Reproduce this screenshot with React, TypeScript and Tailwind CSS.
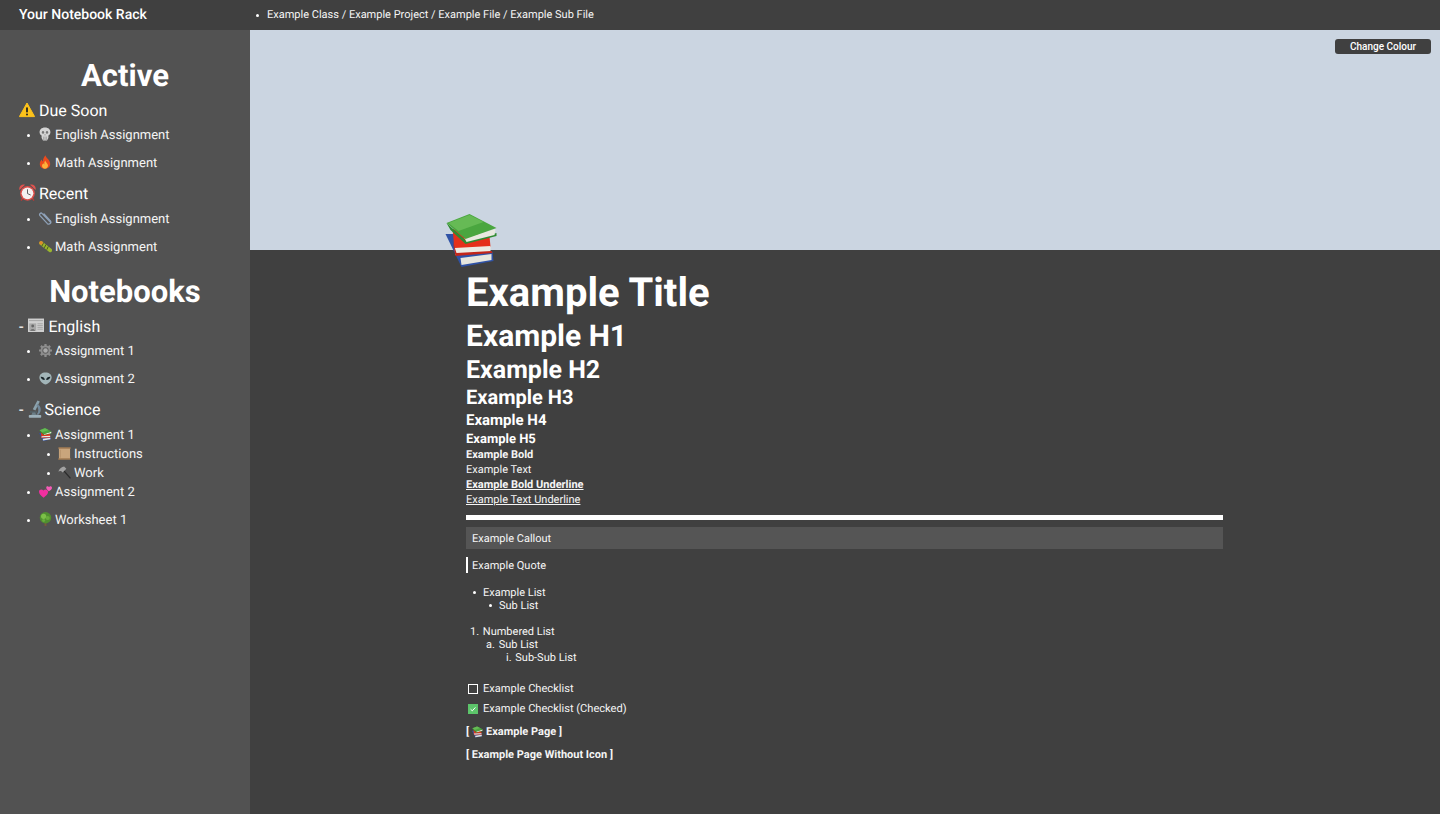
import React from 'react';

type IconProps = { className?: string };

const Warning = ({ className }: IconProps) => (
  <svg viewBox="0 0 16 16" className={className}>
    <path d="M8 1 L15.6 14.6 H0.4 Z" fill="#fcc21b" stroke="#fcc21b" strokeLinejoin="round" />
    <rect x="7.1" y="5.2" width="1.8" height="5.4" rx="0.8" fill="#222" />
    <circle cx="8" cy="12.4" r="1" fill="#222" />
  </svg>
);

const Skull = ({ className }: IconProps) => (
  <svg viewBox="0 0 12 14" className={className}>
    <path d="M6 0.4 C9.6 0.4 11.6 2.6 11.4 5.6 C11.3 7.2 10.4 8.2 9.4 8.6 L9.4 11 L8 13.6 H4 L2.6 11 L2.6 8.6 C1.6 8.2 0.7 7.2 0.6 5.6 C0.4 2.6 2.4 0.4 6 0.4 Z" fill="#d4d4d4" />
    <ellipse cx="4" cy="5.4" rx="1.2" ry="1.3" fill="#777" />
    <ellipse cx="8" cy="5.4" rx="1.2" ry="1.3" fill="#777" />
    <path d="M6 7 L6.7 8.2 H5.3 Z" fill="#777" />
    <path d="M4.6 9.6 V13 M6 9.6 V13.4 M7.4 9.6 V13" stroke="#8a8a8a" strokeWidth="0.6" />
  </svg>
);

const Fire = ({ className }: IconProps) => (
  <svg viewBox="0 0 12 14" className={className}>
    <path d="M6.4 0.2 C7 3 11.2 4.8 11.2 8.8 C11.2 11.8 8.8 13.8 6 13.8 C3 13.8 0.8 11.6 0.8 8.9 C0.8 7 1.9 5.4 2.8 4.6 C3 5.6 3.4 6.2 4 6.4 C3.8 4.2 5 2 6.4 0.2 Z" fill="#ec4a1c" />
    <path d="M6.2 5.6 C6.6 7.4 9 8.6 9 10.6 C9 12.4 7.5 13.8 6 13.8 C4.3 13.8 3 12.4 3 10.8 C3 9.6 3.8 8.8 4.5 8.2 C4.7 8.8 5 9.2 5.4 9.4 C5.2 8 5.4 6.8 6.2 5.6 Z" fill="#fdb13a" />
  </svg>
);

const Alarm = ({ className }: IconProps) => (
  <svg viewBox="0 0 16 16" className={className}>
    <path d="M3.2 13.6 L2 15.6 M12.8 13.6 L14 15.6" stroke="#b93a37" strokeWidth="1.3" />
    <path d="M0.4 5.6 C-0.4 2.4 2.2 -0.2 5.6 0.6 Z" fill="#e0534f" />
    <path d="M15.6 5.6 C16.4 2.4 13.8 -0.2 10.4 0.6 Z" fill="#e0534f" />
    <circle cx="8" cy="8.8" r="6.9" fill="#dc4c48" />
    <circle cx="8" cy="8.8" r="5.5" fill="#f4efef" />
    <path d="M8 5 V9 L11 10.4" stroke="#444" strokeWidth="0.8" fill="none" />
  </svg>
);

const Clip = ({ className }: IconProps) => (
  <svg viewBox="0 0 14 14" className={className}>
    <path d="M12.6 11.4 L4.2 2.6 C2.8 1.2 0.8 2.8 2 4.6 L9.2 12.4 C11.4 14.2 14 12 12.2 9.6 L6 3" fill="none" stroke="#8ea1b8" strokeWidth="1.3" strokeLinecap="round" />
  </svg>
);

const Caterpillar = ({ className }: IconProps) => (
  <svg viewBox="0 0 14 14" className={className}>
    <path d="M2.4 3.4 L12 11" stroke="#9ab52e" strokeWidth="4.2" strokeLinecap="round" />
    <path d="M4.8 3 L3.2 6.4 M7.4 5 L5.8 8.4 M10 7 L8.4 10.4" stroke="#2f3a14" strokeWidth="0.8" />
    <circle cx="2.2" cy="3" r="2" fill="#de8c2a" />
  </svg>
);

const News = ({ className }: IconProps) => (
  <svg viewBox="0 0 16 14" className={className}>
    <rect x="0" y="0" width="16" height="14" fill="#cfcfcf" />
    <rect x="0" y="0" width="16" height="1" fill="#8c8c8c" />
    <path d="M1 2.6 H15" stroke="#9a9a9a" strokeWidth="0.8" />
    <rect x="1.2" y="5.4" width="7" height="7.4" fill="#a8a8a8" />
    <circle cx="4.7" cy="8" r="1.4" fill="#666" />
    <path d="M2.2 12.8 C2.4 10.6 7 10.6 7.2 12.8 Z" fill="#666" />
    <path d="M9.4 5.8 H14.8 M9.4 7.6 H14.8 M9.4 9.4 H14.8 M9.4 11.2 H14.8" stroke="#969696" strokeWidth="0.7" />
  </svg>
);

const Gear = ({ className }: IconProps) => (
  <svg viewBox="0 0 14 14" className={className}>
    <circle cx="7" cy="7" r="5.4" fill="#8e8e8e" />
    <path d="M7 0 V14 M0 7 H14 M2 2 L12 12 M12 2 L2 12" stroke="#8e8e8e" strokeWidth="2.4" />
    <circle cx="7" cy="7" r="3.4" fill="#5f5f5f" />
    <circle cx="7" cy="7" r="2.4" fill="#a9a9a9" />
  </svg>
);

const Alien = ({ className }: IconProps) => (
  <svg viewBox="0 0 14 14" className={className}>
    <path d="M7 0.6 C11 0.6 13.6 2.8 13.6 6 C13.6 9.6 9.6 13.4 7 13.4 C4.4 13.4 0.4 9.6 0.4 6 C0.4 2.8 3 0.6 7 0.6 Z" fill="#a2b5b8" />
    <path d="M1.8 5.2 C4.2 5 6.2 6.4 6.2 8.6 C4 8.8 2 7.4 1.8 5.2 Z" fill="#182428" />
    <path d="M12.2 5.2 C9.8 5 7.8 6.4 7.8 8.6 C10 8.8 12 7.4 12.2 5.2 Z" fill="#182428" />
  </svg>
);

const Microscope = ({ className }: IconProps) => (
  <svg viewBox="0 0 14 18" className={className}>
    <path d="M9.4 0.4 L11.8 1.6 L7.4 10.4 L4.8 9.2 Z" fill="#8ba2ad" />
    <path d="M9.4 4 C13.4 6 14 11.6 10.4 14.8 H8.2 C11 12.4 11 8 8.4 5.8 Z" fill="#72899a" />
    <rect x="2" y="11.4" width="7" height="1.2" fill="#54656e" />
    <rect x="0.8" y="15" width="12.4" height="2.8" rx="0.7" fill="#9cb0ba" />
    <path d="M4.4 12.6 L3.4 15 H8.4 L7.2 12.6 Z" fill="#6c7f88" />
  </svg>
);

const Books = ({ className }: IconProps) => (
  <svg viewBox="0 0 52 53" className={className}>
    {/* blue book */}
    <path d="M0 20 L12 20 L47 38 L48 47 L16 53 Z" fill="#2f52a6" />
    <path d="M15 44 L46 40 L46 46 L16 51 Z" fill="#e6e6de" />
    {/* red book */}
    <path d="M7 15 L44 22 L45 33 L9 35 Z" fill="#e5301b" />
    <path d="M9 34 L45 32 L45 38 L10 41 Z" fill="#ecebe3" />
    <path d="M7 26 L10 42 L47 39 L46 37 L11 39 L9 33 Z" fill="#c2261a" />
    {/* green book */}
    <path d="M1 9 L5 16 L20 30 L51 22 L51 19 L21 27 Z" fill="#2f8a31" />
    <path d="M19 24 L50 15 L49 21 L21 28 Z" fill="#e9e9df" />
    <path d="M1 9 L24 0 L51 14 L20 25 Z" fill="#4aa63f" />
    <path d="M3 9 L24 1 L38 8 L13 17 Z" fill="#66ba55" />
  </svg>
);

const Scroll = ({ className }: IconProps) => (
  <svg viewBox="0 0 14 14" className={className}>
    <rect x="1" y="1" width="12" height="12" fill="#c9a57c" />
    <rect x="0.2" y="0.2" width="13.6" height="1.8" rx="0.9" fill="#a07a52" />
    <rect x="0.2" y="12" width="13.6" height="1.8" rx="0.9" fill="#a07a52" />
    <rect x="2" y="3" width="0.8" height="8.6" fill="#b08e66" />
  </svg>
);

const Hammer = ({ className }: IconProps) => (
  <svg viewBox="0 0 14 14" className={className}>
    <path d="M5.4 4.2 L13 12.8" stroke="#2c2c2c" strokeWidth="1.5" strokeLinecap="round" />
    <path d="M0.4 6 C1.6 2.8 4 0.8 6.6 0.6 L9 3 L5 7 L3.6 5.6 C2.6 5.2 1.4 5.4 0.4 6 Z" fill="#a2a2a2" />
  </svg>
);

const Hearts = ({ className }: IconProps) => (
  <svg viewBox="0 0 14 14" className={className}>
    <path d="M5 13.6 C2 11.6 0 9.4 0 7.2 C0 5 2.8 4 4.8 6 C6.4 3.8 9.8 4.8 9.8 7.4 C9.8 9.8 7.4 12 5 13.6 Z" fill="#f02f9f" />
    <path d="M10.6 6.8 C8.8 5.4 7.8 4.2 7.8 2.8 C7.8 1.4 9.6 0.8 10.8 2.2 C11.8 0.6 14 1.2 14 3 C14 4.6 12.4 5.8 10.6 6.8 Z" fill="#f65cb8" />
  </svg>
);

const Tree = ({ className }: IconProps) => (
  <svg viewBox="0 0 14 15" className={className}>
    <rect x="6" y="10" width="2" height="5" fill="#7a5a3a" />
    <circle cx="7" cy="6.2" r="6.2" fill="#508f30" />
    <circle cx="5" cy="4.6" r="2.8" fill="#7cc048" />
    <circle cx="9.4" cy="6.4" r="2.2" fill="#68ad3c" />
    <circle cx="5" cy="9" r="1.6" fill="#68ad3c" />
  </svg>
);

const Bullet = () => <span className="w-[3px] h-[3px] rounded-full bg-white shrink-0" />;

const SideItem = ({ icon, label }: { icon: React.ReactNode; label: string }) => (
  <div className="flex items-center h-[19px] pl-[27px] text-[13px] text-neutral-100">
    <Bullet />
    <span className="w-[12px] ml-[9px] mr-[4px] flex justify-center">{icon}</span>
    <span>{label}</span>
  </div>
);

const SubItem = ({ icon, label }: { icon: React.ReactNode; label: string }) => (
  <div className="flex items-center h-[19px] pl-[47px] text-[13px] text-neutral-100">
    <Bullet />
    <span className="w-[13px] ml-[8px] mr-[3px] flex justify-center">{icon}</span>
    <span>{label}</span>
  </div>
);

const SideHead = ({ children }: { children: React.ReactNode }) => (
  <div className="flex items-center h-[24px] pl-[19px] text-[16px] text-white">{children}</div>
);

const Sidebar = () => (
  <aside className="w-[250px] shrink-0 bg-[#525252] text-white">
    <h2 className="text-center text-[31px] font-bold leading-[36px] pt-[28px]">Active</h2>
    <div className="mt-[5px]">
      <SideHead>
        <Warning className="w-[16px] h-[16px] shrink-0 mr-[4px] -mt-[3px]" />
        Due Soon
      </SideHead>
      <div className="flex flex-col gap-[9px] mt-[3px]">
        <SideItem icon={<Skull className="w-[12px] h-[14px] shrink-0 -mt-[3px]" />} label="English Assignment" />
        <SideItem icon={<Fire className="w-[12px] h-[14px] shrink-0 -mt-[3px]" />} label="Math Assignment" />
      </div>
    </div>
    <div className="mt-[9px]">
      <SideHead>
        <Alarm className="w-[17px] h-[17px] shrink-0 mr-[3px] -mt-[4px]" />
        Recent
      </SideHead>
      <div className="flex flex-col gap-[9px] mt-[4px]">
        <SideItem icon={<Clip className="w-[14px] h-[14px] shrink-0 -mt-[3px]" />} label="English Assignment" />
        <SideItem icon={<Caterpillar className="w-[13px] h-[13px] shrink-0 -mt-[3px]" />} label="Math Assignment" />
      </div>
    </div>
    <h2 className="text-center text-[31px] font-bold leading-[36px] mt-[17px]">Notebooks</h2>
    <div className="mt-[5px]">
      <SideHead>
        - <News className="w-[16px] h-[14px] shrink-0 ml-[5px] mr-[4px] -mt-[5px]" />
        English
      </SideHead>
      <div className="flex flex-col gap-[9px] mt-[3px]">
        <SideItem icon={<Gear className="w-[13px] h-[13px] shrink-0 -mt-[3px]" />} label="Assignment 1" />
        <SideItem icon={<Alien className="w-[13px] h-[13px] shrink-0 -mt-[2px]" />} label="Assignment 2" />
      </div>
    </div>
    <div className="mt-[9px]">
      <SideHead>
        - <Microscope className="w-[14px] h-[18px] shrink-0 ml-[5px] mr-[2px] -mt-[3px]" />
        Science
      </SideHead>
      <div className="flex flex-col mt-[4px]">
        <SideItem icon={<Books className="w-[13px] h-[13px] shrink-0 -mt-[3px]" />} label="Assignment 1" />
        <SubItem icon={<Scroll className="w-[13px] h-[13px] shrink-0 -mt-[3px]" />} label="Instructions" />
        <SubItem icon={<Hammer className="w-[13px] h-[13px] shrink-0 -mt-[3px]" />} label="Work" />
        <SideItem icon={<Hearts className="w-[13px] h-[13px] shrink-0 -mt-[3px]" />} label="Assignment 2" />
        <div className="mt-[9px]">
          <SideItem icon={<Tree className="w-[13px] h-[14px] shrink-0 -mt-[3px]" />} label="Worksheet 1" />
        </div>
      </div>
    </div>
  </aside>
);

export default function App() {
  return (
    <div className="w-[1440px] h-[814px] overflow-hidden flex flex-col bg-[#404040] text-white font-['Roboto',sans-serif] antialiased [text-rendering:geometricPrecision]">
      {/* Top bar */}
      <header className="h-[30px] shrink-0 flex items-center bg-[#404040]">
        <div className="w-[250px] pl-[19px] text-[14px] font-medium">Your Notebook Rack</div>
        <div className="flex items-center pl-[6px] text-[11px] text-neutral-100">
          <Bullet />
          <span className="ml-[8px]">Example Class / Example Project / Example File / Example Sub File</span>
        </div>
      </header>

      <div className="flex flex-1 min-h-0">
        <Sidebar />
        <main className="flex-1 min-w-0">
          {/* Banner */}
          <div className="relative h-[220px] bg-[#cbd5e1]">
            <button className="absolute top-[9px] right-[9px] w-[96px] h-[15px] rounded-[3px] bg-[#404040] text-[10px] font-medium text-white flex items-center justify-center">
              Change Colour
            </button>
          </div>

          {/* Page */}
          <div className="relative w-[757px] ml-[216px]">
            <Books className="absolute -left-[21px] -top-[36px] w-[53px] h-[53px]" />
            <h1 className="text-[40px] font-bold leading-[47px] pt-[19px]">Example Title</h1>
            <h2 className="text-[30px] font-bold leading-[35px] mt-[3px]">Example H1</h2>
            <h3 className="text-[25px] font-bold leading-[29px] mt-[2px]">Example H2</h3>
            <h4 className="text-[20px] font-bold leading-[24px] mt-0">Example H3</h4>
            <h5 className="text-[15px] font-bold leading-[18px] mt-[2px]">Example H4</h5>
            <h6 className="text-[13px] font-bold leading-[15px] mt-[3px]">Example H5</h6>
            <div className="text-[11px] leading-[15px] text-neutral-100">
              <p className="font-bold">Example Bold</p>
              <p>Example Text</p>
              <p className="font-bold underline">Example Bold Underline</p>
              <p className="underline">Example Text Underline</p>
            </div>
            <hr className="h-[5px] bg-white border-0 mt-[8px]" />
            <div className="mt-[7px] h-[22px] flex items-center px-[6px] pt-[2px] bg-[#555555] text-[11px] text-neutral-100">Example Callout</div>
            <div className="mt-[8px] h-[16px] flex items-center pl-[4px] pt-[2px] border-l-2 border-white text-[11px] text-neutral-100">Example Quote</div>
            <div className="mt-[13px] text-[11px] leading-[13px] text-neutral-100">
              <div className="flex items-center pl-[7px]"><Bullet /><span className="ml-[7px]">Example List</span></div>
              <div className="flex items-center pl-[23px]"><Bullet /><span className="ml-[7px]">Sub List</span></div>
            </div>
            <div className="mt-[13px] text-[11px] leading-[13px] text-neutral-100">
              <div className="pl-[4px]">1. <span className="ml-[1px]">Numbered List</span></div>
              <div className="pl-[20px]">a. <span className="ml-[1px]">Sub List</span></div>
              <div className="pl-[40px]">i. <span className="ml-[1px]">Sub-Sub List</span></div>
            </div>
            <div className="mt-[18px] h-[14px] flex items-center pl-[2px] text-[11.1px] text-neutral-100">
              <span className="w-[10px] h-[10px] border border-white mr-[5px]" />
              Example Checklist
            </div>
            <div className="mt-[6px] h-[14px] flex items-center pl-[2px] text-[11.1px] text-neutral-100">
              <span className="w-[10px] h-[10px] bg-[#5cc46a] mr-[5px] flex items-center justify-center">
                <svg viewBox="0 0 10 10" className="w-[10px] h-[10px]">
                  <path d="M2.6 5.2 L4.3 6.8 L7.4 3.4" fill="none" stroke="#fff" strokeWidth="1" />
                </svg>
              </span>
              Example Checklist (Checked)
            </div>
            <div className="mt-[9px] h-[14px] flex items-center text-[11px] font-bold text-neutral-100">
              [<Books className="w-[11px] h-[12px] shrink-0 ml-[3px] mr-[3px]" />Example Page ]
            </div>
            <div className="mt-[9px] h-[14px] flex items-center text-[11px] font-bold text-neutral-100">[ Example Page Without Icon ]</div>
          </div>
        </main>
      </div>
    </div>
  );
}
